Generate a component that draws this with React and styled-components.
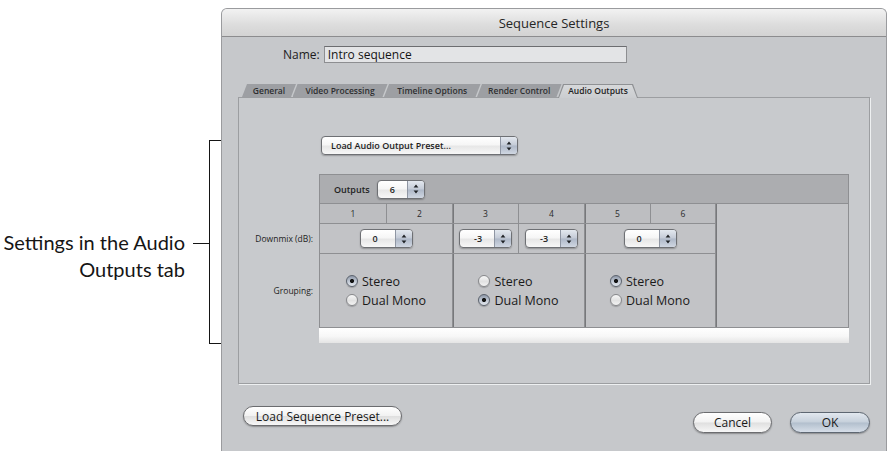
import React from 'react';
import styled, { createGlobalStyle } from 'styled-components';

const GlobalStyle = createGlobalStyle`
  html, body { margin: 0; padding: 0; background: #fff; }
  body { width: 890px; height: 451px; overflow: hidden; }
`;

const Page = styled.div`
  display: flex;
  width: 890px;
  height: 451px;
`;

/* ---------- callout on the left ---------- */
const Annotation = styled.aside`
  flex: none;
  width: 221px;
  display: flex;
  align-items: flex-start;
  padding-top: 140px;
  box-sizing: border-box;
`;

const Caption = styled.div`
  flex: 1;
  margin-top: 89px;
  text-align: right;
  font-family: Lato, "Open Sans", sans-serif;
  font-size: 20px;
  line-height: 27px;
  color: #151515;
`;

const Leader = styled.span`
  flex: none;
  width: 16px;
  margin: 103px 0 0 8px;
  border-top: 1.5px solid #151515;
`;

const Bracket = styled.span`
  flex: none;
  width: 12px;
  height: 204px;
  box-sizing: border-box;
  border: 1.5px solid #151515;
  border-right: none;
`;

/* ---------- dialog window ---------- */
const Window = styled.section`
  flex: none;
  width: 666px;
  height: 443px;
  margin-top: 8px;
  box-sizing: border-box;
  display: flex;
  flex-direction: column;
  background: #c6c8cb;
  border: 1px solid #9a9b9e;
  border-bottom: none;
  border-radius: 6px 6px 0 0;
  overflow: hidden;
  font-family: "Open Sans", "DejaVu Sans", sans-serif;
  color: #1c1c1c;
`;

const TitleBar = styled.header`
  flex: none;
  height: 27px;
  display: flex;
  align-items: center;
  justify-content: center;
  background: linear-gradient(#f2f2f2, #dcdcdc 60%, #d3d3d3);
  border-bottom: 1px solid #8c8c8e;
  font-size: 13px;
  color: #262626;
`;

const NameRow = styled.div`
  display: flex;
  align-items: center;
  margin-top: 9px;
  padding-left: 61px;
  font-size: 12px;
`;

const NameField = styled.div`
  width: 303px;
  height: 17px;
  margin-left: 4px;
  box-sizing: border-box;
  padding-left: 3px;
  border: 1px solid #8d8e91;
  border-top-color: #6c6d70;
  background: #e3e4e6;
  font-size: 12px;
  line-height: 15px;
  color: #151515;
`;

const TabStrip = styled.nav`
  display: flex;
  height: 13px;
  margin-top: 21px;
  padding-left: 20px;
  position: relative;
  z-index: 1;
`;

const Tab = styled.div`
  flex: none;
  width: ${(p) => p.$w}px;
  height: 13px;
  margin-right: -3.5px;
  position: relative;
  display: flex;
  align-items: center;
  justify-content: center;
  font-size: 8.5px;
  font-weight: 600;
  color: ${(p) => (p.$active ? '#222' : '#2e2f31')};
  white-space: nowrap;

  &::before {
    content: '';
    position: absolute;
    inset: 0 0 ${(p) => (p.$active ? '-1px' : '0')} 0;
    background: ${(p) => (p.$active ? '#8f9194' : '#9d9fa3')};
    clip-path: ${(p) =>
      p.$active
        ? 'polygon(5px 0, calc(100% - 5px) 0, 100% 100%, 0 100%)'
        : 'polygon(5px 0, 100% 0, calc(100% - 5px) 100%, 0 100%)'};
    z-index: -2;
  }

  &::after {
    content: '';
    display: ${(p) => (p.$active ? 'block' : 'none')};
    position: absolute;
    inset: 1px 1px -1px 1px;
    background: linear-gradient(#d6d8da, #cbcdd0);
    clip-path: polygon(5px 0, calc(100% - 5px) 0, 100% 100%, 0 100%);
    z-index: -1;
  }
`;

const Panel = styled.div`
  flex: none;
  height: 287px;
  margin: 0 16px;
  box-sizing: border-box;
  border: 1px solid #9c9ea1;
  box-shadow: 1px 1px 0 #eef0f1;
  background: #c8cacd;
  display: flex;
  flex-direction: column;
  align-items: flex-start;
  padding-top: 38px;
`;

/* ---------- pop-up menus ---------- */
const PopUp = styled.div`
  flex: none;
  display: flex;
  width: ${(p) => p.$w}px;
  height: 19px;
  margin-left: ${(p) => p.$ml || 0}px;
  box-sizing: border-box;
  border: 1px solid #6e7074;
  border-radius: 4px;
  overflow: hidden;
  background: linear-gradient(#ffffff, #f6f6f6 45%, #e7e7e7 55%, #f7f7f7);
  box-shadow: 0 1px 1.5px rgba(0, 0, 0, 0.25);
`;

const PopUpText = styled.span`
  flex: 1;
  display: flex;
  align-items: center;
  padding-left: ${(p) => p.$pad}px;
  font-size: 9px;
  font-weight: 600;
  color: #1e1e1e;
  white-space: nowrap;
`;

const PopUpStepper = styled.span`
  flex: none;
  width: 16px;
  display: flex;
  align-items: center;
  justify-content: center;
  border-left: 1px solid #8f96a3;
  background: linear-gradient(#e3e8ef, #c4cbd7 48%, #aeb8c8 52%, #d0d7e2);
`;

const Arrows = () => (
  <svg width="6" height="10" viewBox="0 0 6 10">
    <path d="M3 0.6 L5.4 3.6 H0.6 Z M3 9.4 L5.4 6.4 H0.6 Z" fill="#1f2226" />
  </svg>
);

const Menu = ({ w, pad, ml, children }) => (
  <PopUp $w={w} $ml={ml}>
    <PopUpText $pad={pad}>{children}</PopUpText>
    <PopUpStepper>
      <Arrows />
    </PopUpStepper>
  </PopUp>
);

/* ---------- output matrix ---------- */
const Matrix = styled.div`
  display: grid;
  grid-template-columns: 80px 530px;
  grid-template-rows: 29px 20px 30px 75px 15px;
  margin-top: 19px;
`;

const RowLabel = styled.div`
  grid-column: 1;
  grid-row: ${(p) => p.$row};
  display: flex;
  align-items: center;
  justify-content: flex-end;
  padding-right: 6px;
  font-size: 8.5px;
  color: #222;
  white-space: nowrap;
`;

const Grid = styled.div`
  grid-column: 2;
  grid-row: 1 / 5;
  display: grid;
  grid-template-columns: 66px 65px 65px 65px 65px 64px 1fr;
  grid-template-rows: 28px 19px 29px 73px;
  gap: 1px;
  padding: 1px;
  background: #8e8f92;
`;

const HeaderBar = styled.div`
  grid-column: 1 / -1;
  display: flex;
  align-items: center;
  gap: 7px;
  padding-left: 14px;
  background: #acadb0;
  font-size: 9px;
  font-weight: 600;
  color: #1f1f1f;
`;

const Cell = styled.div`
  grid-column: span ${(p) => p.$span || 1};
  display: flex;
  align-items: center;
  justify-content: center;
  background: ${(p) => p.$bg};
  box-shadow: ${(p) => (p.$groupStart ? 'inset 1px 0 0 #77787b' : 'none')};
  font-size: 8.5px;
  color: #2a2a2a;
`;

const Remainder = styled.div`
  grid-column: 7;
  grid-row: 2 / 5;
  background: #c4c5c8;
  box-shadow: inset 1px 0 0 #77787b;
`;

const Strip = styled.div`
  grid-column: 2;
  grid-row: 5;
  background: linear-gradient(#ffffff, #f7f7f7 55%, #e4e4e4);
`;

const RadioList = styled.div`
  display: flex;
  flex-direction: column;
`;

const RadioItem = styled.div`
  display: flex;
  align-items: center;
  gap: 4px;
  height: 19px;
  font-size: 12.5px;
  color: #1a1a1a;
`;

const RadioDot = styled.span`
  flex: none;
  width: 12px;
  height: 12px;
  box-sizing: border-box;
  border-radius: 50%;
  border: 1px solid ${(p) => (p.$on ? '#5c636e' : '#87888b')};
  background: ${(p) =>
    p.$on
      ? 'radial-gradient(circle, #141414 0 1.7px, transparent 2.4px), linear-gradient(#8e98a8, #c6cdd8 60%, #e2e6ec)'
      : 'linear-gradient(#f7f7f7, #e2e2e2 55%, #f3f3f3)'};
  box-shadow: 0 1px 1px rgba(0, 0, 0, 0.2);
`;

/* ---------- buttons ---------- */
const ButtonBar = styled.div`
  display: flex;
  justify-content: space-between;
  align-items: flex-start;
  margin-top: 22px;
  padding: 0 16px 0 21px;
`;

const ButtonGroup = styled.div`
  display: flex;
  gap: 18px;
  margin-top: 6px;
`;

const PushButton = styled.button`
  width: ${(p) => p.$w}px;
  height: ${(p) => p.$h || 21}px;
  box-sizing: border-box;
  padding: 0;
  border-radius: 11px;
  border: 1px solid ${(p) => (p.$default ? '#5e6772' : '#6b6c6f')};
  background: ${(p) =>
    p.$default
      ? 'linear-gradient(#e2e8ef, #c6d0db 48%, #b2bfcd 52%, #d6dee8)'
      : 'linear-gradient(#ffffff, #f2f2f2 48%, #dfdfdf 52%, #f7f7f7)'};
  box-shadow: 0 1px 1.5px rgba(0, 0, 0, 0.3);
  font-family: inherit;
  font-size: 12px;
  color: #1a1a1a;
`;

const tabs = [
  { label: 'General', w: 54 },
  { label: 'Video Processing', w: 95 },
  { label: 'Timeline Options', w: 96.5 },
  { label: 'Render Control', w: 84.5 },
  { label: 'Audio Outputs', w: 80, active: true },
];

const downmix = [
  { value: '0', span: 2, groupStart: false },
  { value: '-3', span: 1, groupStart: true },
  { value: '-3', span: 1, groupStart: false },
  { value: '0', span: 2, groupStart: true },
];

const grouping = ['stereo', 'dual', 'stereo'];

export default function App() {
  return (
    <>
      <GlobalStyle />
      <Page>
        <Annotation>
          <Caption>
            Settings in the Audio
            <br />
            Outputs tab
          </Caption>
          <Leader />
          <Bracket />
        </Annotation>

        <Window>
          <TitleBar>Sequence Settings</TitleBar>

          <NameRow>
            Name:
            <NameField>Intro sequence</NameField>
          </NameRow>

          <TabStrip>
            {tabs.map((t) => (
              <Tab key={t.label} $w={t.w} $active={t.active}>
                {t.label}
              </Tab>
            ))}
          </TabStrip>

          <Panel>
            <Menu w={197} pad={9} ml={82}>
              Load Audio Output Preset...
            </Menu>

            <Matrix>
              <RowLabel $row={3}>Downmix (dB):</RowLabel>
              <RowLabel $row={4}>Grouping:</RowLabel>

              <Grid>
                <HeaderBar>
                  Outputs
                  <Menu w={48} pad={12}>
                    6
                  </Menu>
                </HeaderBar>

                {[1, 2, 3, 4, 5, 6].map((n) => (
                  <Cell key={n} $bg="#bdbec1" $groupStart={n === 3 || n === 5}>
                    {n}
                  </Cell>
                ))}
                <Remainder />

                {downmix.map((d, i) => (
                  <Cell key={i} $span={d.span} $bg="#c2c3c6" $groupStart={d.groupStart}>
                    <Menu w={53} pad={d.value === '0' ? 12 : 14}>
                      {d.value}
                    </Menu>
                  </Cell>
                ))}

                {grouping.map((mode, i) => (
                  <Cell key={i} $span={2} $bg="#c2c3c6" $groupStart={i > 0}>
                    <RadioList>
                      <RadioItem>
                        <RadioDot $on={mode === 'stereo'} />
                        Stereo
                      </RadioItem>
                      <RadioItem>
                        <RadioDot $on={mode === 'dual'} />
                        Dual Mono
                      </RadioItem>
                    </RadioList>
                  </Cell>
                ))}
              </Grid>

              <Strip />
            </Matrix>
          </Panel>

          <ButtonBar>
            <PushButton $w={159} $h={20}>
              Load Sequence Preset...
            </PushButton>
            <ButtonGroup>
              <PushButton $w={79}>Cancel</PushButton>
              <PushButton $w={80} $default>
                OK
              </PushButton>
            </ButtonGroup>
          </ButtonBar>
        </Window>
      </Page>
    </>
  );
}
